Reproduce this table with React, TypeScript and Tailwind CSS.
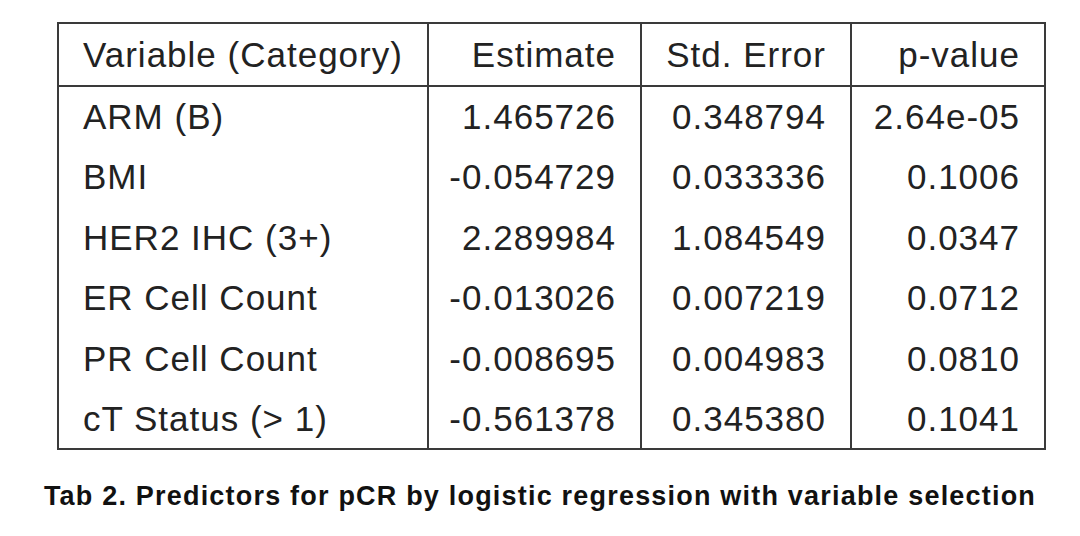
const rows = [
  ['ARM (B)', '1.465726', '0.348794', '2.64e-05'],
  ['BMI', '-0.054729', '0.033336', '0.1006'],
  ['HER2 IHC (3+)', '2.289984', '1.084549', '0.0347'],
  ['ER Cell Count', '-0.013026', '0.007219', '0.0712'],
  ['PR Cell Count', '-0.008695', '0.004983', '0.0810'],
  ['cT Status (> 1)', '-0.561378', '0.345380', '0.1041'],
]

export default function App() {
  return (
    <div className="w-[1080px] h-[536px] bg-white font-['Liberation_Sans',Arial,sans-serif] text-[#222]">
      <div className="pt-[22px] pl-[57px]">
        <table className="border-collapse border-2 border-[#3a3a3a] text-[35px] leading-none tracking-[1px]">
          <colgroup>
            <col className="w-[370px]" />
            <col className="w-[213px]" />
            <col className="w-[210px]" />
            <col className="w-[194px]" />
          </colgroup>
          <thead>
            <tr className="h-[63px] border-b-2 border-[#3a3a3a]">
              <th className="font-normal text-left pl-6 border-r-2 border-[#3a3a3a]">Variable (Category)</th>
              <th className="font-normal text-right pr-6 border-r-2 border-[#3a3a3a]">Estimate</th>
              <th className="font-normal text-right pr-6 border-r-2 border-[#3a3a3a]">Std. Error</th>
              <th className="font-normal text-right pr-6">p-value</th>
            </tr>
          </thead>
          <tbody>
            {rows.map((r) => (
              <tr key={r[0]} className="h-[60.5px]">
                <td className="text-left pl-6 border-r-2 border-[#3a3a3a]">{r[0]}</td>
                <td className="text-right pr-6 border-r-2 border-[#3a3a3a]">{r[1]}</td>
                <td className="text-right pr-6 border-r-2 border-[#3a3a3a]">{r[2]}</td>
                <td className="text-right pr-6">{r[3]}</td>
              </tr>
            ))}
          </tbody>
        </table>
      </div>
      <p className="mt-[33px] text-center text-[27px] leading-none font-bold text-[#111] tracking-[1.2px]">
        Tab 2. Predictors for pCR by logistic regression with variable selection
      </p>
    </div>
  )
}
